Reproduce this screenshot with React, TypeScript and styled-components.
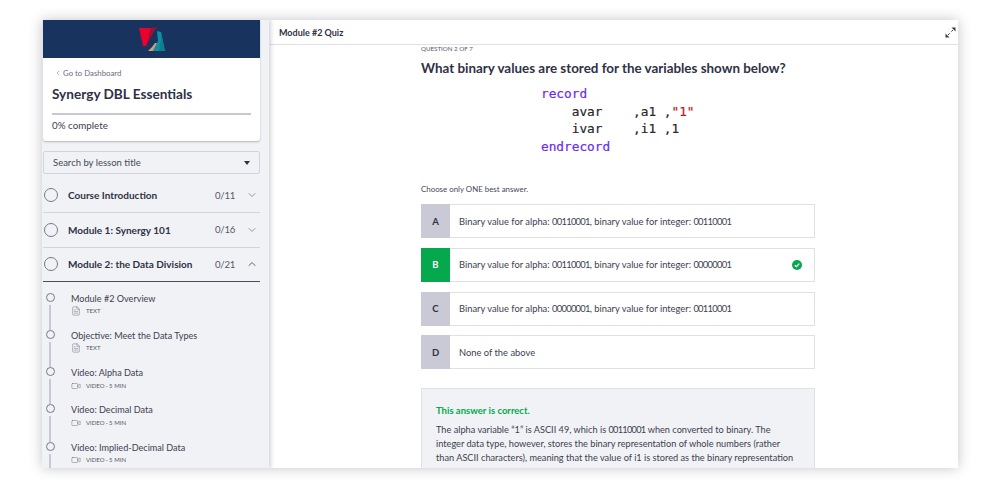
// App.tsx
import React from "react";
import styled, { createGlobalStyle } from "styled-components";
import { ChevronDown, ChevronUp, ChevronLeft, Video, FileText } from "lucide-react";

const GlobalStyle = createGlobalStyle`
	html, body {
		margin: 0;
		padding: 0;
		background: #fff;
		font-family: "Lato", "Noto Sans", sans-serif;
		color: #2f3145;
	}
`;

const Page = styled.div`
	width: 1000px;
	height: 488px;
	padding: 20px 42px;
	box-sizing: border-box;
	overflow: hidden;
`;

const Frame = styled.div`
	display: flex;
	height: 448px;
	overflow: hidden;
	background: #fff;
	box-shadow: 0 0 12px rgba(40, 42, 60, 0.28);
`;

const Sidebar = styled.aside`
	width: 227px;
	flex: none;
	background: #f1f2f5;
	padding-left: 1px;
	box-sizing: border-box;
	overflow: hidden;
	box-shadow: 2px 0 4px rgba(40, 42, 60, 0.2);
	position: relative;
`;

const SideInner = styled.div`
	width: 217px;
`;

const CourseCard = styled.div`
	background: #fff;
	border-radius: 0 0 3px 3px;
	box-shadow: 0 1px 2px rgba(40, 42, 60, 0.3);
	height: 121px;
`;

const Banner = styled.div`
	height: 38px;
	background: #19335f;
	display: flex;
	align-items: center;
	justify-content: center;
`;

const CardBody = styled.div`
	padding: 9px 9px 0;
`;

const BackLink = styled.div`
	display: flex;
	align-items: center;
	gap: 1px;
	padding-left: 2px;
	font-size: 7.8px;
	line-height: 12px;
	color: #6b6d7e;
`;

const CourseTitle = styled.h1`
	margin: 5px 0 0;
	font-size: 13.6px;
	line-height: 20px;
	font-weight: 700;
	color: #2f3145;
`;

const Progress = styled.div`
	height: 2px;
	margin-top: 9px;
	background: #c7c8d3;
`;

const ProgressLabel = styled.div`
	margin-top: 3px;
	font-size: 9.8px;
	line-height: 14px;
	color: #3c3e50;
`;

const SearchBox = styled.div`
	height: 23px;
	margin-top: 10px;
	box-sizing: border-box;
	display: flex;
	align-items: center;
	justify-content: space-between;
	padding: 0 9px;
	background: #f1f2f5;
	border: 1px solid #d2d3dc;
	border-radius: 2px;
	font-size: 9.5px;
	color: #45475a;
`;

const Caret = styled.span`
	width: 0;
	height: 0;
	border-left: 3px solid transparent;
	border-right: 3px solid transparent;
	border-top: 4px solid #2f3145;
`;

const Modules = styled.div`
	padding-top: 4.5px;
`;

const ModuleRow = styled.div<{ $open?: boolean }>`
	height: 34.5px;
	box-sizing: border-box;
	display: flex;
	align-items: center;
	padding: 0 2px 0 1px;
	border-bottom: 1px solid ${p => (p.$open ? "#4a4c60" : "#d2d3dc")};
`;

const ModuleCircle = styled.span`
	width: 14px;
	height: 14px;
	flex: none;
	box-sizing: border-box;
	border: 1px solid #77788a;
	border-radius: 50%;
`;

const ModuleName = styled.span`
	flex: 1;
	margin-left: 10px;
	font-size: 10px;
	font-weight: 700;
	color: #2f3145;
`;

const ModuleCount = styled.span`
	width: 31px;
	font-size: 9.6px;
	letter-spacing: -0.2px;
	color: #55576a;
`;

const Lessons = styled.div`
	padding-top: 10.5px;
`;

const Lesson = styled.div`
	height: 37.3px;
	display: flex;
	padding-left: 2px;
`;

const Marker = styled.div`
	width: 10px;
	display: flex;
	flex-direction: column;
	align-items: center;
	flex: none;
`;

const Dot = styled.span`
	width: 9px;
	height: 9px;
	flex: none;
	box-sizing: border-box;
	border: 1px solid #77788a;
	border-radius: 50%;
`;

const Connector = styled.span`
	width: 1.5px;
	flex: 1;
	margin-top: 3px;
	background: #c7c8d3;
`;

const LessonBody = styled.div`
	margin-left: 16px;
`;

const LessonTitle = styled.div`
	font-size: 9.1px;
	line-height: 12px;
	color: #3c3e50;
`;

const LessonMeta = styled.div`
	display: flex;
	align-items: center;
	gap: 5px;
	margin-top: 1.5px;
	font-size: 6px;
	line-height: 10px;
	color: #55576a;
`;

const Main = styled.main`
	flex: 1;
	min-width: 0;
	margin-left: 1px;
	display: flex;
	flex-direction: column;
	overflow: hidden;
`;

const TopBar = styled.header`
	height: 25px;
	flex: none;
	box-sizing: border-box;
	display: flex;
	align-items: center;
	justify-content: space-between;
	padding: 0 2px 0 9px;
	border-bottom: 1px solid #dfe0e8;
	font-size: 9px;
	font-weight: 700;
	color: #2f3145;
`;

const Quiz = styled.div`
	width: 394px;
	margin-left: 151px;
`;

const QuestionCount = styled.div`
	font-size: 6.2px;
	line-height: 8px;
	color: #55576a;
	text-transform: uppercase;
`;

const QuestionTitle = styled.h2`
	margin: 5px 0 0;
	font-size: 13.4px;
	line-height: 20px;
	font-weight: 700;
	color: #2f3145;
	white-space: nowrap;
`;

const Code = styled.pre`
	margin: 7px 0 0 120px;
	font-family: "DejaVu Sans Mono", monospace;
	font-size: 12.75px;
	line-height: 17.6px;
	color: #25272e;
	-webkit-text-stroke: 0.2px currentColor;
`;

const Keyword = styled.span`
	color: #6a2cf5;
`;

const Literal = styled.span`
	color: #c4161c;
`;

const Instruction = styled.p`
	margin: 28px 0 0;
	font-size: 7.9px;
	line-height: 12px;
	color: #45475a;
`;

const Options = styled.div`
	display: flex;
	flex-direction: column;
	gap: 9.6px;
	margin-top: 9px;
`;

const Option = styled.div`
	height: 34px;
	display: flex;
	align-items: center;
	box-sizing: border-box;
	border: 1px solid #dfe0e8;
	background: #fff;
`;

const OptionLetter = styled.span<{ $correct?: boolean }>`
	width: 29px;
	height: 34px;
	margin: 0 0 0 -1px;
	flex: none;
	display: flex;
	align-items: center;
	justify-content: center;
	font-size: 9.5px;
	font-weight: 700;
	background: ${p => (p.$correct ? "#05a84d" : "#c9cad5")};
	color: ${p => (p.$correct ? "#fff" : "#2f3145")};
`;

const OptionText = styled.span`
	flex: 1;
	margin-left: 9px;
	font-size: 9.35px;
	color: #3c3e50;
`;

// Lato's figures run wider than the ones in the screenshot
const Binary = styled.span`
	letter-spacing: -0.7px;
`;

const CheckMark = styled.svg`
	width: 10px;
	height: 10px;
	margin-right: 12px;
	flex: none;
`;

const Feedback = styled.section`
	margin-top: 19px;
	padding: 15px 18px 15px 14px;
	background: #f1f2f5;
	border: 1px solid #dfe0e8;
`;

const FeedbackTitle = styled.div`
	font-size: 9.5px;
	line-height: 14px;
	font-weight: 700;
	color: #05a84d;
`;

const FeedbackText = styled.p`
	margin: 5px 0 0;
	font-size: 9.2px;
	line-height: 14px;
	color: #3c3e50;
`;

const modules = [
	{ name: "Course Introduction", count: "0/11" },
	{ name: "Module 1: Synergy 101", count: "0/16" },
	{ name: "Module 2: the Data Division", count: "0/21", open: true },
];

const lessons = [
	{ title: "Module #2 Overview", meta: "Text" },
	{ title: "Objective: Meet the Data Types", meta: "Text" },
	{ title: "Video: Alpha Data", meta: "Video · 5 min" },
	{ title: "Video: Decimal Data", meta: "Video · 5 min" },
	{ title: "Video: Implied-Decimal Data", meta: "Video · 5 min" },
];

const answers = [
	{ letter: "A", text: "Binary value for alpha: 00110001, binary value for integer: 00110001" },
	{ letter: "B", text: "Binary value for alpha: 00110001, binary value for integer: 00000001", correct: true },
	{ letter: "C", text: "Binary value for alpha: 00000001, binary value for integer: 00110001" },
	{ letter: "D", text: "None of the above" },
];

const withBinary = (text: string) =>
	text.split(/(\d{8})/).map((part, i) => (i % 2 ? <Binary key={i}>{part}</Binary> : part));

const App = () => (
	<Page>
		<GlobalStyle />
		<Frame>
			<Sidebar>
				<SideInner>
					<CourseCard>
						<Banner>
							<svg width="26" height="25" viewBox="0 0 26 25">
								<polygon points="0,1 12,1 10,11 7,19 4,19" fill="#e8022c" />
								<polygon points="12,1 18,0 15,4 12,10 8,18 7,19 10,11" fill="#a50e2e" />
								<polygon points="18,4 22,5 26,24 14,24 19,14" fill="#118ea5" />
								<polygon points="22,5 26,24 20,24 22,13" fill="#0d7f8f" />
								<polygon points="9,24 13,20 16,16 18,16 14,24" fill="#c9a27a" />
							</svg>
						</Banner>
						<CardBody>
							<BackLink>
								<ChevronLeft size={8} strokeWidth={1.5} />
								Go to Dashboard
							</BackLink>
							<CourseTitle>Synergy DBL Essentials</CourseTitle>
							<Progress />
							<ProgressLabel>0% complete</ProgressLabel>
						</CardBody>
					</CourseCard>
					<SearchBox>
						Search by lesson title
						<Caret />
					</SearchBox>
					<Modules>
						{modules.map(m => (
							<ModuleRow key={m.name} $open={m.open}>
								<ModuleCircle />
								<ModuleName>{m.name}</ModuleName>
								<ModuleCount>{m.count}</ModuleCount>
								{m.open ? (
									<ChevronUp size={12} strokeWidth={1.5} color="#2f3145" />
								) : (
									<ChevronDown size={12} strokeWidth={1.5} color="#77788a" />
								)}
							</ModuleRow>
						))}
					</Modules>
					<Lessons>
						{lessons.map(l => (
							<Lesson key={l.title}>
								<Marker>
									<Dot />
									<Connector />
								</Marker>
								<LessonBody>
									<LessonTitle>{l.title}</LessonTitle>
									<LessonMeta>
										{l.meta === "Text" ? (
											<FileText size={10} strokeWidth={1} />
										) : (
											<Video size={10} strokeWidth={1} />
										)}
										{l.meta.toUpperCase()}
									</LessonMeta>
								</LessonBody>
							</Lesson>
						))}
					</Lessons>
				</SideInner>
			</Sidebar>
			<Main>
				<TopBar>
					Module #2 Quiz
					<svg width="11" height="11" viewBox="0 0 11 11" fill="none">
						<path d="M6.5 0.5H10.5V4.5Z" fill="#3c3e50" />
						<path d="M4.5 10.5H0.5V6.5Z" fill="#3c3e50" />
						<path d="M8 3 6.4 4.6M3 8 4.6 6.4" stroke="#3c3e50" strokeWidth="1" />
					</svg>
				</TopBar>
				<Quiz>
					<QuestionCount>Question 2 of 7</QuestionCount>
					<QuestionTitle>What binary values are stored for the variables shown below?</QuestionTitle>
					<Code>
						<Keyword>record</Keyword>
						{"\n    avar    ,a1 ,"}
						<Literal>"1"</Literal>
						{"\n    ivar    ,i1 ,1\n"}
						<Keyword>endrecord</Keyword>
					</Code>
					<Instruction>Choose only ONE best answer.</Instruction>
					<Options>
						{answers.map(a => (
							<Option key={a.letter}>
								<OptionLetter $correct={a.correct}>{a.letter}</OptionLetter>
								<OptionText>{withBinary(a.text)}</OptionText>
								{a.correct && (
									<CheckMark viewBox="0 0 10 10">
										<circle cx="5" cy="5" r="5" fill="#05a84d" />
										<path d="M2.8 5.2 4.4 6.7 7.3 3.6" fill="none" stroke="#fff" strokeWidth="1.2" />
									</CheckMark>
								)}
							</Option>
						))}
					</Options>
					<Feedback>
						<FeedbackTitle>This answer is correct.</FeedbackTitle>
						<FeedbackText>
							The alpha variable “1” is ASCII 49, which is <Binary>00110001</Binary> when converted to binary. The
							integer data type, however, stores the binary representation of whole numbers (rather
							than ASCII characters), meaning that the value of i1 is stored as the binary representation
							of 1: <Binary>00000001</Binary>.
						</FeedbackText>
					</Feedback>
				</Quiz>
			</Main>
		</Frame>
	</Page>
);

export default App;
